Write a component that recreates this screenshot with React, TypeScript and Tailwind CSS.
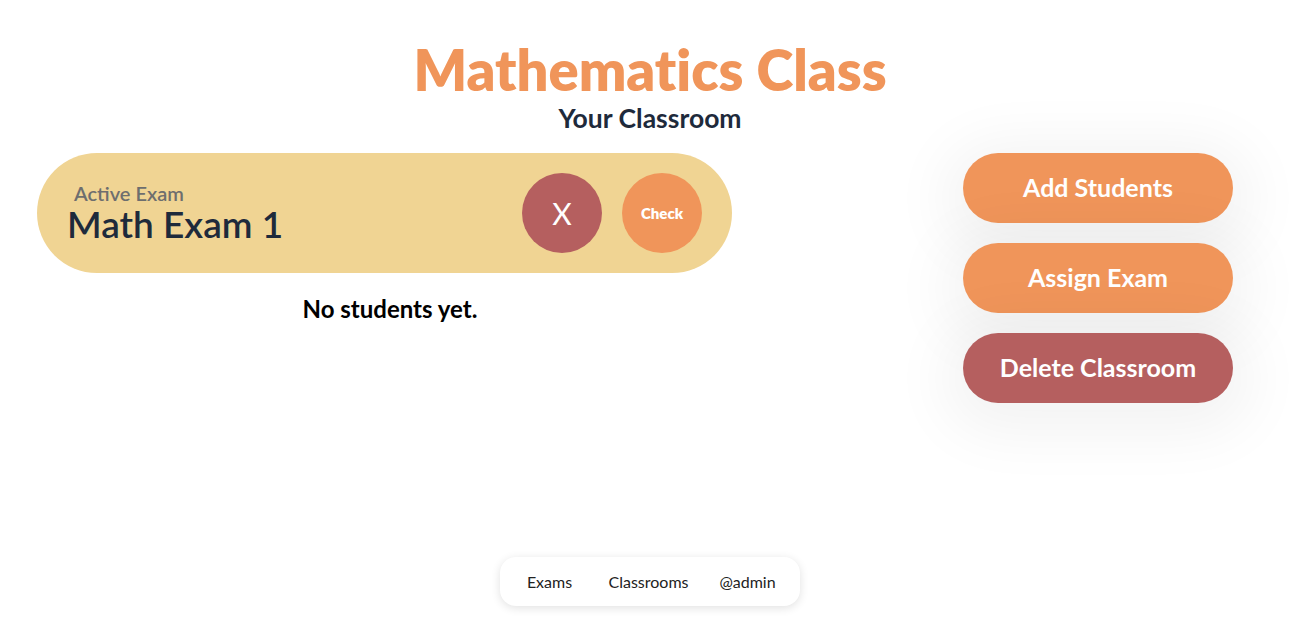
import React from "react";

export default function App() {
  return (
    <div className="w-[1300px] h-[636px] bg-white relative overflow-hidden" style={{ fontFamily: "Lato, 'Noto Sans', sans-serif" }}>
      <div className="flex flex-col items-center pt-[38px]">
        <h1 className="text-[56px] leading-[64px] font-extrabold text-[#F0955A] [font-variant-ligatures:none]">Mathematics Class</h1>
        <h2 className="text-[26.5px] leading-[30px] font-bold text-[#1e2a3b] mt-[1px]">Your Classroom</h2>
      </div>
      <div className="flex mt-[20px]">
        <div className="w-[770px] pl-[37px] flex flex-col">
          <div className="w-[695px] h-[120px] rounded-full bg-[#F0D493] flex items-center pl-[30px] pr-[30px]">
            <div className="flex flex-col flex-1 -mt-[1px]">
              <span className="text-[20px] leading-[22px] font-semibold text-[#6e6e6e] pl-[7px]">Active Exam</span>
              <span className="text-[37px] leading-[40px] font-semibold text-[#1e2a3b]">Math Exam 1</span>
            </div>
            <div className="flex gap-[20px]">
              <button className="w-[80px] h-[80px] rounded-full bg-[#B55F5F] text-white text-[30px] flex items-center justify-center">X</button>
              <button className="w-[80px] h-[80px] rounded-full bg-[#F0955A] text-white text-[15px] font-extrabold flex items-center justify-center">Check</button>
            </div>
          </div>
          <p className="text-[24px] leading-[30px] font-bold text-black text-center w-[706px] mt-[21px]">No students yet.</p>
        </div>
        <div className="flex-1 flex justify-center pl-[126px]">
          <div className="flex flex-col gap-[20px]">
            <button className="w-[270px] h-[70px] rounded-full bg-[#F0955A] text-white text-[25px] font-bold shadow-[0_10px_60px_20px_rgba(0,0,0,0.05)]">Add Students</button>
            <button className="w-[270px] h-[70px] rounded-full bg-[#F0955A] text-white text-[25px] font-bold shadow-[0_10px_60px_20px_rgba(0,0,0,0.05)]">Assign Exam</button>
            <button className="w-[270px] h-[70px] rounded-full bg-[#B55F5F] text-white text-[25px] font-bold shadow-[0_10px_60px_20px_rgba(0,0,0,0.05)]">Delete Classroom</button>
          </div>
        </div>
      </div>
      <div className="absolute left-[500px] top-[557px] w-[300px] h-[49px] rounded-2xl bg-white shadow-[0_2px_10px_rgba(0,0,0,0.12)] flex items-center justify-center pr-[3px] text-[16px] text-[#222]">
        <span className="w-[99px] text-center">Exams</span>
        <span className="w-[99px] text-center">Classrooms</span>
        <span className="w-[99px] text-center">@admin</span>
      </div>
    </div>
  );
}
